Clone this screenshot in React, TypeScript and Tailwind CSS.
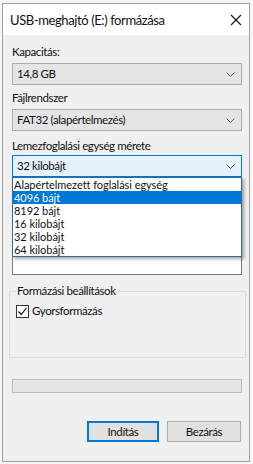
import React from "react";

const Chevron = () => (
  <svg width="9" height="5" viewBox="0 0 9 5" className="shrink-0">
    <path d="M0.5 0.5 L4.5 4.5 L8.5 0.5" fill="none" stroke="#5a5a5a" strokeWidth="1" />
  </svg>
);

function Combo({ text, focused }: { text: string; focused?: boolean }) {
  return (
    <div
      className={
        "w-[230px] h-[22px] flex items-center justify-between pl-[4px] pr-[6px] border " +
        (focused ? "bg-[#e5f1fb] border-[#0078d7]" : "bg-[#e5e5e5] border-[#adadad]")
      }
    >
      <span>{text}</span>
      <Chevron />
    </div>
  );
}

export default function App() {
  const items = [
    "Alapértelmezett foglalási egység",
    "4096 bájt",
    "8192 bájt",
    "16 kilobájt",
    "32 kilobájt",
    "64 kilobájt",
  ];
  return (
    <div
      className="w-[253px] h-[464px] bg-[#f7f7f7] pt-[3px] pl-[2px] overflow-hidden text-[11.5px] tracking-[-0.4px] text-[#111] leading-[14px]"
      style={{ fontFamily: 'Lato, "Noto Sans", sans-serif' }}
    >
      <div className="w-[248px] h-[459px] border border-[#a0a0a0] flex flex-col bg-[#f0f0f0]">
        {/* title bar */}
        <div className="h-[31px] bg-white flex items-center justify-between pl-[7px] pr-[6px] shrink-0">
          <span className="text-[13px] tracking-[-0.4px] leading-[16px]">USB-meghajtó (E:) formázása</span>
          <svg width="12" height="12" viewBox="0 0 12 12" className="mr-[1px]">
            <path d="M1 1 L11 11 M11 1 L1 11" stroke="#111" strokeWidth="1.1" />
          </svg>
        </div>
        {/* body */}
        <div className="flex-1 flex flex-col pl-[9px]">
          <div className="mt-[9px] h-[16px] flex items-center">Kapacitás:</div>
          <div className="mt-[3px]">
            <Combo text="14,8 GB" />
          </div>
          <div className="mt-[5px] h-[16px] flex items-center">Fájlrendszer</div>
          <div className="mt-[3px]">
            <Combo text="FAT32 (alapértelmezés)" />
          </div>
          <div className="mt-[7px] h-[16px] flex items-center">Lemezfoglalási egység mérete</div>
          <div className="mt-[1px] relative">
            <Combo text="32 kilobájt" focused />
            {/* dropdown list */}
            <div className="absolute left-0 top-[22px] w-[230px] bg-white border border-[#2e6da4] shadow-[2px_2px_3px_rgba(0,0,0,0.35)] z-10">
              {items.map((it, i) => (
                <div
                  key={it}
                  className={
                    "h-[13px] text-[11px] tracking-[-0.05px] leading-[13px] flex items-center pl-[1px] " +
                    (i === 1 ? "bg-[#0078d7] text-white" : "")
                  }
                >
                  {it}
                </div>
              ))}
            </div>
          </div>
          <div className="mt-[76px] w-[230px] h-[22px] bg-white border border-[#7a7a7a]"></div>

          {/* group box */}
          <div className="relative -ml-[3px] mt-[16px] w-[237px] h-[67px] border border-[#dcdcdc]">
            <span className="absolute -top-[8px] left-[6px] bg-[#f0f0f0] px-[1px]">Formázási beállítások</span>
            <div className="flex items-center mt-[12px] ml-[6px]">
              <div className="w-[13px] h-[13px] bg-white border border-[#333] flex items-center justify-center">
                <svg width="11" height="11" viewBox="0 0 11 11">
                  <path d="M1.5 5.5 L4.2 8.5 L9.5 1.8" fill="none" stroke="#222" strokeWidth="1.2" />
                </svg>
              </div>
              <span className="ml-[3px]">Gyorsformázás</span>
            </div>
          </div>

          {/* progress */}
          <div className="mt-[21px] w-[230px] h-[14px] bg-[#e6e6e6] border border-[#bcbcbc]"></div>

          {/* buttons */}
          <div className="flex mt-[28px] ml-[75px] gap-[8px]">
            <div className="w-[72px] h-[21px] bg-[#e1e1e1] border-2 border-[#0078d7] flex items-center justify-center">
              Indítás
            </div>
            <div className="w-[74px] h-[21px] bg-[#e1e1e1] border border-[#adadad] flex items-center justify-center">
              Bezárás
            </div>
          </div>
        </div>
      </div>
    </div>
  );
}
